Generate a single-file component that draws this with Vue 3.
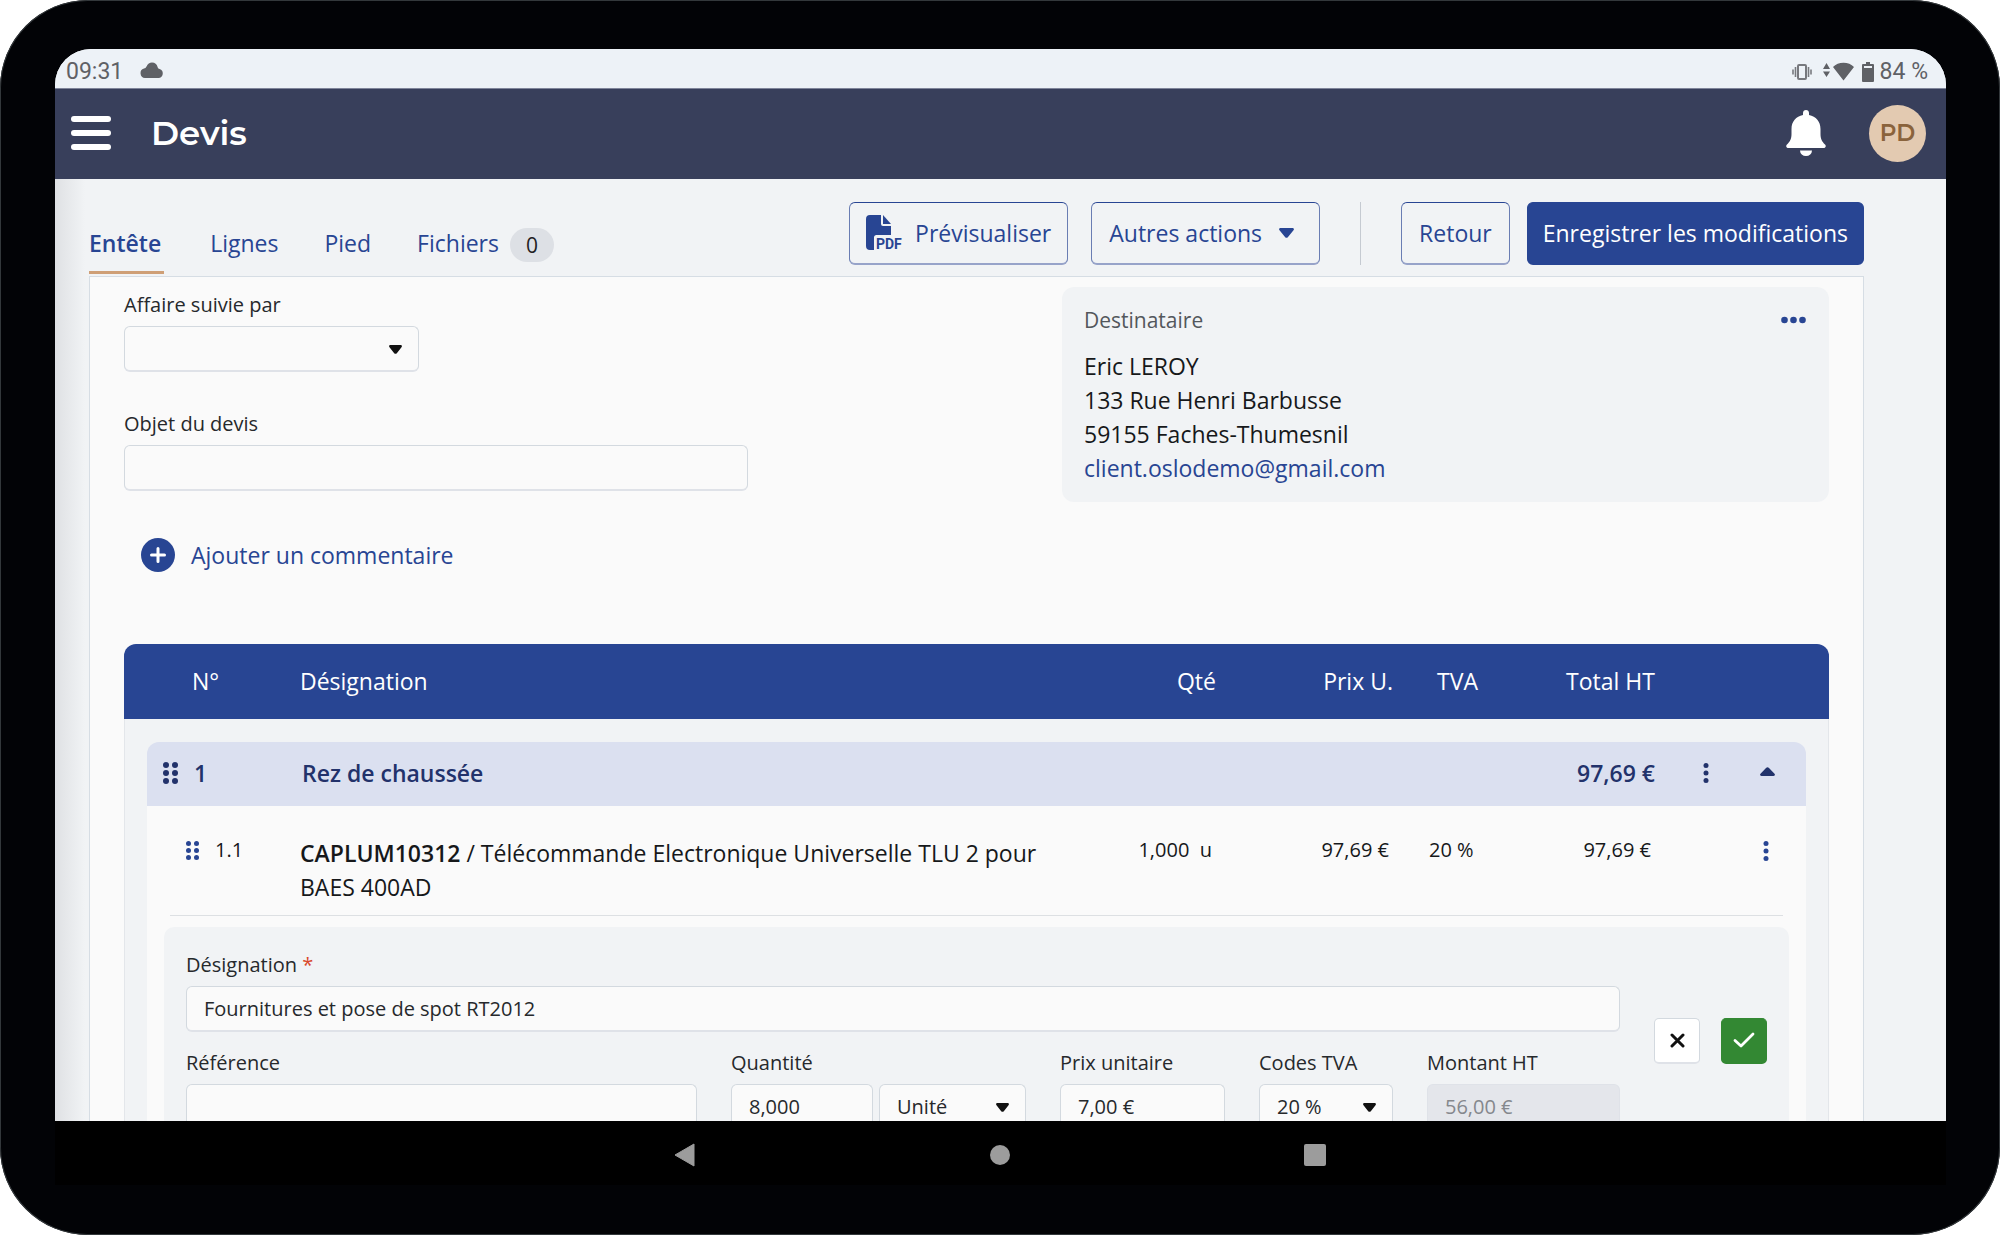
<script setup>
import { ref } from 'vue'

const tabs = [
  { label: 'Entête', active: true },
  { label: 'Lignes' },
  { label: 'Pied' },
  { label: 'Fichiers', count: 0 },
]

const address = ['Eric LEROY', '133 Rue Henri Barbusse', '59155 Faches-Thumesnil']
const dots = [0, 1, 2, 3, 4, 5]

const follower = ref('')
const subject = ref('')
const line = ref({
  label: 'Fournitures et pose de spot RT2012',
  reference: '',
  quantity: '8,000',
  unit: 'Unité',
  price: '7,00 €',
  vat: '20 %',
  amount: '56,00 €',
})
</script>

<template>
  <div class="device">
    <div class="screen">
      <div class="status">
        <div class="status-group">
          <span>09:31</span>
          <svg class="cloud" width="24" height="16" viewBox="0 0 24 16"><path d="M5 16a4.800 4.800 0 0 1-1-9.400c1.300-.3 1.800-.6 2.500-2C7.700 2 9.600.5 12 .5c3 0 4.800 1.600 5.600 4.500.3 1.200.7 1.700 2 2.100A4.600 4.600 0 0 1 19 16z" fill="#5f6166" /></svg>
        </div>
        <div class="status-group right">
          <svg class="vibrate" width="20" height="16" viewBox="0 0 20 16" fill="none" stroke="#77797e" stroke-width="2"><rect x="6" y="1" width="8" height="14" rx="1" /><path d="M3.500 3v10M1 5.500v5M16.500 3v10M19 5.500v5" stroke-width="1.600" /></svg>
          <svg class="wifi" width="31" height="20" viewBox="0 0 31 20" fill="#5f6166"><path d="M3.500 1 7 7H0zM3.500 15 7 9.500H0zM10 5C15-.8 26-.8 31 5L20.500 18.500z" /></svg>
          <svg width="12" height="20" viewBox="0 0 12 20" fill="#5f6166"><path d="M4 0h4v2h3a1 1 0 0 1 1 1v16a1 1 0 0 1-1 1H1a1 1 0 0 1-1-1V3a1 1 0 0 1 1-1h3zM2 4v2h8V4z" fill-rule="evenodd" /></svg>
          <span class="battery">84 %</span>
        </div>
      </div>

      <header class="appbar">
        <button class="menu" type="button" aria-label="Menu"><i></i><i></i><i></i></button>
        <h1>Devis</h1>
        <button class="bell" type="button" aria-label="Notifications">
          <svg width="42" height="46" viewBox="0 0 42 46" fill="#fff"><path d="M21 0c1.800 0 3 1.200 3 3v2c7 1.400 11.500 6.500 11.500 14v5c0 5 1.500 7.500 4.500 10.500 1.500 1.600.7 3.500-1.500 3.500h-35C1.300 38 .5 36.100 2 34.500 5 31.500 6.500 29 6.500 24v-5C6.500 11.500 11 6.400 18 5V3c0-1.800 1.200-3 3-3zM15 40.500h12a6 5.500 0 0 1-12 0z" /></svg>
        </button>
        <button class="avatar" type="button">PD</button>
      </header>

      <main class="page">
        <div class="toolbar">
          <nav class="tabs">
            <a v-for="t in tabs" :key="t.label" href="#" class="tab" :class="{ active: t.active }">
              {{ t.label }}<span v-if="t.count !== undefined" class="count">{{ t.count }}</span>
            </a>
          </nav>
          <div class="actions">
            <button class="btn preview" type="button">
              <svg width="37" height="38" viewBox="0 0 37 38" fill="#284593">
                <path d="M4 1h11v9a2 2 0 0 0 2 2h8v9H10.500A2.500 2.500 0 0 0 8 23.500V36H4a4 4 0 0 1-4-4V5a4 4 0 0 1 4-4z" />
                <path d="M17 1l8 9h-8z" />
                <text x="10" y="35" font-family="Roboto, sans-serif" font-weight="700" font-size="14">PDF</text>
              </svg>
              Prévisualiser
            </button>
            <button class="btn others" type="button">
              Autres actions
              <svg width="15" height="10" viewBox="0 0 15 10" fill="#284593"><path d="M1.500 0h12c1.300 0 1.900 1.300 1 2.300L9 9a2 2 0 0 1-3 0L.5 2.300C-.4 1.300.2 0 1.500 0z" /></svg>
            </button>
            <span class="separator"></span>
            <button class="btn back" type="button">Retour</button>
            <button class="btn primary" type="button">Enregistrer les modifications</button>
          </div>
        </div>

        <section class="sheet">
          <div class="intro">
            <div class="form">
              <label for="follower">Affaire suivie par</label>
              <div class="select follower">
                <select id="follower" v-model="follower"><option value=""></option></select>
                <svg class="caret" viewBox="0 0 13 9"><path d="M1.500 0h10c1.200 0 1.900 1.200 1 2.200L8 8a2 2 0 0 1-3 0L.5 2.200C-.4 1.200.3 0 1.500 0z" /></svg>
              </div>
              <label class="subject-label" for="subject">Objet du devis</label>
              <input id="subject" v-model="subject" class="subject" type="text" />
              <button class="comment" type="button">
                <svg width="34" height="34" viewBox="0 0 34 34"><circle cx="17" cy="17" r="17" fill="#284593" /><path d="M17 10.500v13M10.500 17h13" stroke="#fff" stroke-width="3" stroke-linecap="round" /></svg>
                Ajouter un commentaire
              </button>
            </div>

            <aside class="card">
              <div class="card-head">
                <span>Destinataire</span>
                <button type="button" aria-label="Options du destinataire">
                  <svg width="25" height="8" viewBox="0 0 25 8" fill="#284593"><circle cx="3.500" cy="4" r="3.300" /><circle cx="12.500" cy="4" r="3.300" /><circle cx="21.500" cy="4" r="3.300" /></svg>
                </button>
              </div>
              <address>
                <span v-for="a in address" :key="a">{{ a }}</span>
                <a href="mailto:client.oslodemo@gmail.com">client.oslodemo@gmail.com</a>
              </address>
            </aside>
          </div>

          <table>
            <thead>
              <tr>
                <th class="num">N°</th>
                <th>Désignation</th>
                <th class="end">Qté</th>
                <th class="end">Prix U.</th>
                <th class="vat">TVA</th>
                <th class="end">Total HT</th>
                <th></th>
              </tr>
            </thead>
            <tbody>
              <tr class="group">
                <td class="num">
                  <svg width="15" height="22" viewBox="0 0 15 22" fill="#22326b"><circle v-for="d in dots" :key="d" :cx="3 + (d % 2) * 9" :cy="3 + Math.floor(d / 2) * 8" r="3" /></svg>
                  1
                </td>
                <td class="name">Rez de chaussée</td>
                <td></td>
                <td></td>
                <td></td>
                <td class="end">97,69 €</td>
                <td class="tools">
                  <button type="button" aria-label="Options">
                    <svg width="6" height="20" viewBox="0 0 6 20" fill="#22326b"><circle cx="3" cy="2.500" r="2.500" /><circle cx="3" cy="10" r="2.500" /><circle cx="3" cy="17.500" r="2.500" /></svg>
                  </button>
                  <button class="toggle" type="button" aria-label="Replier">
                    <svg width="15" height="9" viewBox="0 0 15 9" fill="#22326b"><path d="M1.500 9h12c1.300 0 1.900-1.200 1-2.200L9 1a2 2 0 0 0-3 0L.5 6.800C-.4 7.800.2 9 1.500 9z" /></svg>
                  </button>
                </td>
              </tr>
              <tr class="item">
                <td class="num">
                  <svg width="13" height="19" viewBox="0 0 13 19" fill="#284593"><circle v-for="d in dots" :key="d" :cx="2.500 + (d % 2) * 8" :cy="2.500 + Math.floor(d / 2) * 7" r="2.500" /></svg>
                  1.1
                </td>
                <td class="desc"><strong>CAPLUM10312</strong> / Télécommande Electronique Universelle TLU 2 pour BAES 400AD</td>
                <td class="end">1,000&nbsp; u</td>
                <td class="end">97,69 €</td>
                <td class="vat">20 %</td>
                <td class="end">97,69 €</td>
                <td class="tools">
                  <button type="button" aria-label="Options">
                    <svg width="6" height="20" viewBox="0 0 6 20" fill="#284593"><circle cx="3" cy="2.500" r="2.500" /><circle cx="3" cy="10" r="2.500" /><circle cx="3" cy="17.500" r="2.500" /></svg>
                  </button>
                </td>
              </tr>
              <tr class="edit">
                <td colspan="7">
                  <div class="editor">
                    <div class="fields">
                      <div class="field">
                        <label for="label">Désignation <em>*</em></label>
                        <input id="label" v-model="line.label" type="text" />
                      </div>
                      <div class="field-row">
                        <div class="field grow">
                          <label for="reference">Référence</label>
                          <input id="reference" v-model="line.reference" type="text" />
                        </div>
                        <div class="field quantity">
                          <label for="quantity">Quantité</label>
                          <div class="pair">
                            <input id="quantity" v-model="line.quantity" type="text" />
                            <div class="select unit">
                              <select v-model="line.unit" aria-label="Unité"><option>Unité</option></select>
                              <svg class="caret" viewBox="0 0 13 9"><path d="M1.500 0h10c1.200 0 1.900 1.200 1 2.200L8 8a2 2 0 0 1-3 0L.5 2.200C-.4 1.200.3 0 1.500 0z" /></svg>
                            </div>
                          </div>
                        </div>
                        <div class="field price">
                          <label for="price">Prix unitaire</label>
                          <input id="price" v-model="line.price" type="text" />
                        </div>
                        <div class="field code">
                          <label for="vat">Codes TVA</label>
                          <div class="select">
                            <select id="vat" v-model="line.vat"><option>20 %</option></select>
                            <svg class="caret" viewBox="0 0 13 9"><path d="M1.500 0h10c1.200 0 1.900 1.200 1 2.200L8 8a2 2 0 0 1-3 0L.5 2.200C-.4 1.200.3 0 1.500 0z" /></svg>
                          </div>
                        </div>
                        <div class="field amount">
                          <label for="amount">Montant HT</label>
                          <input id="amount" v-model="line.amount" type="text" disabled />
                        </div>
                      </div>
                    </div>
                    <div class="confirm">
                      <button type="button" aria-label="Annuler">
                        <svg width="15" height="15" viewBox="0 0 15 15" stroke="#111" stroke-width="3" stroke-linecap="round"><path d="M2 2l11 11M13 2 2 13" /></svg>
                      </button>
                      <button class="ok" type="button" aria-label="Valider">
                        <svg width="22" height="16" viewBox="0 0 22 16" fill="none" stroke="#fff" stroke-width="2.800" stroke-linecap="round" stroke-linejoin="round"><path d="M2 8.500l6 5.500L20 2" /></svg>
                      </button>
                    </div>
                  </div>
                </td>
              </tr>
            </tbody>
          </table>
        </section>
      </main>
    </div>

    <nav class="system">
      <button type="button" aria-label="Précédent"><svg width="22" height="24" viewBox="0 0 22 24"><path d="M20 1v22L1 12z" fill="#9c9c9c" stroke="#9c9c9c" stroke-linejoin="round" /></svg></button>
      <button type="button" aria-label="Accueil"><svg width="20" height="20" viewBox="0 0 20 20"><circle cx="10" cy="10" r="10" fill="#9c9c9c" /></svg></button>
      <button type="button" aria-label="Applications"><svg width="22" height="22" viewBox="0 0 22 22"><rect width="22" height="22" rx="2" fill="#9c9c9c" /></svg></button>
    </nav>
  </div>
</template>

<style>
body {
  margin: 0;
  background: #fff;
}
</style>

<style scoped>
* {
  box-sizing: border-box;
}

.device {
  display: flex;
  flex-direction: column;
  height: 100vh;
  padding: 49px 54px 50px 55px;
  border-radius: 88px;
  background: #020306;
  box-shadow: inset 0 0 0 1px #33383b;
  font-family: "Open Sans", "Noto Sans", sans-serif;
  font-size: 23px;
  line-height: 34px;
  color: #16181a;
}

button {
  display: flex;
  align-items: center;
  justify-content: center;
  padding: 0;
  border: 0;
  background: none;
  font: inherit;
  color: inherit;
}

a {
  color: #284593;
  text-decoration: none;
}

.screen {
  flex: 1;
  min-height: 0;
  display: flex;
  flex-direction: column;
  overflow: hidden;
  border-radius: 36px 36px 0 0;
  background: #f1f3f5;
}

.status {
  flex: none;
  display: flex;
  justify-content: space-between;
  height: 39px;
  padding: 7px 18px 0 11px;
  background: #edf2f7;
  font-family: Roboto, sans-serif;
  font-size: 23px;
  line-height: 32px;
  color: #5f6166;
}

.status-group {
  display: flex;
  align-items: center;
  gap: 17px;
}

.cloud {
  margin-bottom: 4px;
}

.status-group.right {
  gap: 0;
}

.vibrate {
  margin-right: 11px;
}

.wifi {
  margin-right: 8px;
}

.battery {
  margin-left: 6px;
}

.appbar {
  flex: none;
  display: flex;
  align-items: center;
  height: 91px;
  padding: 0 20px 2px 16px;
  background: #383f5b;
  border-top: 1px solid #7f859a;
  color: #fff;
}

.menu {
  flex-direction: column;
  gap: 8px;
  width: 40px;
  margin-right: 40px;
}

.menu i {
  width: 100%;
  height: 6px;
  border-radius: 3px;
  background: #fff;
}

h1 {
  margin: 0;
  font-family: Montserrat, Inter, sans-serif;
  font-size: 34px;
  font-weight: 600;
  line-height: 44px;
}

.bell {
  margin: 0 42px 0 auto;
}

.avatar {
  width: 57px;
  height: 57px;
  border-radius: 50%;
  background: #e3cab1;
  font-family: Montserrat, Inter, sans-serif;
  font-size: 23px;
  font-weight: 600;
  color: #8a633c;
}

.page {
  flex: 1;
  min-height: 0;
  padding: 0 82px 0 34px;
  background: linear-gradient(to right, #dfe1e4, #f1f3f5 30px);
}

.toolbar {
  display: flex;
  justify-content: space-between;
  height: 97px;
  padding-top: 23px;
}

.tabs {
  display: flex;
  gap: 46px;
}

.tab {
  display: flex;
  align-items: center;
  height: 72px;
  padding-top: 12px;
  border-bottom: 3px solid transparent;
}

.tab.active {
  padding-right: 3px;
  border-bottom-color: #cf9f76;
  font-weight: 600;
}

.count {
  height: 34px;
  margin: 4px 0 0 11px;
  padding: 0 16px;
  border-radius: 17px;
  background: #dde0e5;
  font-size: 21px;
  color: #222;
}

.actions {
  display: flex;
  height: 63px;
}

.btn {
  padding: 0 17px;
  border: 1px solid #6a7db3;
  border-top-color: #284593;
  border-bottom: 2px solid #97a3c9;
  border-radius: 6px;
  color: #284593;
  white-space: nowrap;
}

.preview {
  gap: 12px;
  padding: 0 16px;
}

.others {
  gap: 17px;
  margin-left: 23px;
  padding-right: 25px;
}

.separator {
  width: 1px;
  margin: 0 40px;
  background: #c5cad1;
}

.btn.primary {
  margin-left: 17px;
  padding: 0 15px;
  border-color: #284593;
  background: #284593;
  color: #fff;
}

.sheet {
  padding: 0 34px;
  border: 1px solid #d6dde4;
  background: #fafafa;
}

.intro {
  display: flex;
  justify-content: space-between;
  align-items: flex-start;
  margin-bottom: 72px;
}

.form {
  display: flex;
  flex-direction: column;
  width: 624px;
  padding-top: 14px;
}

label {
  margin-bottom: 7px;
  font-size: 20px;
  line-height: 28px;
  color: #26292c;
}

label em {
  font-style: normal;
  color: #d9482b;
}

input,
select {
  width: 100%;
  height: 46px;
  margin: 0;
  padding: 0 17px;
  border: 1px solid #d3d9df;
  border-bottom: 2px solid #dfe2e8;
  border-radius: 6px;
  background: #fafafa;
  font: inherit;
  font-size: 20px;
  color: #26292c;
  appearance: none;
}

input:disabled {
  border-color: #dfe2e8;
  background: #e4e6eb;
  color: #85888d;
}

.select {
  position: relative;
}

.select select {
  display: block;
}

.caret {
  position: absolute;
  top: 19px;
  right: 17px;
  width: 13px;
  height: 9px;
  fill: #111;
  pointer-events: none;
}

.follower {
  width: 295px;
}

.subject-label {
  margin-top: 38px;
}

.comment {
  align-self: flex-start;
  gap: 16px;
  margin: 47px 0 0 17px;
  color: #284593;
}

.card {
  width: 767px;
  margin-top: 10px;
  padding: 19px 23px 17px 22px;
  border-radius: 12px;
  background: #f1f3f5;
}

.card-head {
  display: flex;
  justify-content: space-between;
  margin-bottom: 15px;
  font-size: 21px;
  line-height: 28px;
  color: #53575c;
}

address {
  display: flex;
  flex-direction: column;
  font-style: normal;
}

table,
thead,
tbody {
  display: block;
}

tr {
  display: grid;
  grid-template-columns: 153px 1fr 100px 177px 111px 151px 151px;
}

th,
td {
  padding: 0;
  font-weight: 400;
  text-align: left;
}

thead tr {
  padding: 20px 23px 21px;
  border-radius: 12px 12px 0 0;
  background: #284593;
  color: #fff;
}

th.num {
  padding-left: 45px;
}

th.vat {
  padding-left: 44px;
}

.end {
  text-align: right;
}

tbody {
  padding: 23px 22px 0;
  border: 1px solid #e3e6ea;
  border-width: 0 1px;
  background: #f1f3f5;
}

.group {
  padding: 14px 0 16px;
  border-radius: 12px 12px 0 0;
  background: #dbe0f0;
  color: #22326b;
}

.group td {
  font-weight: 600;
}

.group .num,
.item .num {
  display: flex;
  align-items: center;
  gap: 16px;
  padding-left: 16px;
}

.group .name {
  padding-left: 2px;
}

.tools {
  display: flex;
  align-items: center;
  padding-left: 48px;
}

.tools .toggle {
  margin: 0 0 3px 51px;
}

.item {
  grid-template-columns: 130px 1fr 100px 177px 111px 151px 128px;
  padding: 27px 0 11px;
  margin: 0 23px;
  border-bottom: 1px solid #dde0e3;
  background: #fafafa;
  box-shadow: -23px 0 #fafafa, 23px 0 #fafafa;
  font-size: 20px;
}

.item td {
  height: 34px;
}

.item .end {
  padding-right: 4px;
}

.item .vat {
  padding-left: 36px;
}

.item .desc {
  height: auto;
  padding: 3px 44px 0 0;
  font-size: 23px;
}

.item .tools {
  padding: 2px 0 0 108px;
}

strong {
  font-weight: 600;
}

.edit {
  display: block;
  background: #fafafa;
}

.edit td {
  display: block;
  padding: 11px 17px 0;
}

.editor {
  display: flex;
  align-items: center;
  gap: 34px;
  padding: 24px 22px;
  border-radius: 10px;
  background: #f1f3f5;
}

.fields {
  flex: 1;
  display: flex;
  flex-direction: column;
  gap: 17px;
}

.field {
  display: flex;
  flex-direction: column;
}

.field-row {
  display: flex;
  gap: 34px;
}

.grow {
  flex: 1;
}

.pair {
  display: flex;
  gap: 6px;
}

.quantity {
  width: 295px;
}

.unit {
  flex: none;
  width: 147px;
}

.price {
  width: 165px;
}

.code {
  width: 134px;
}

.amount {
  width: 193px;
}

.confirm {
  display: flex;
  gap: 21px;
}

.confirm button {
  width: 46px;
  height: 46px;
  border: 1px solid #d3d9df;
  border-bottom: 2px solid #dfe2e8;
  border-radius: 5px;
  background: #fff;
}

.confirm .ok {
  border-color: #338833;
  background: #338833;
}

.system {
  flex: none;
  display: flex;
  align-items: center;
  justify-content: center;
  gap: 293px;
  height: 64px;
  padding: 4px 2px 0 0;
  background: #000;
}

.system button {
  width: 22px;
  height: 24px;
}
</style>
